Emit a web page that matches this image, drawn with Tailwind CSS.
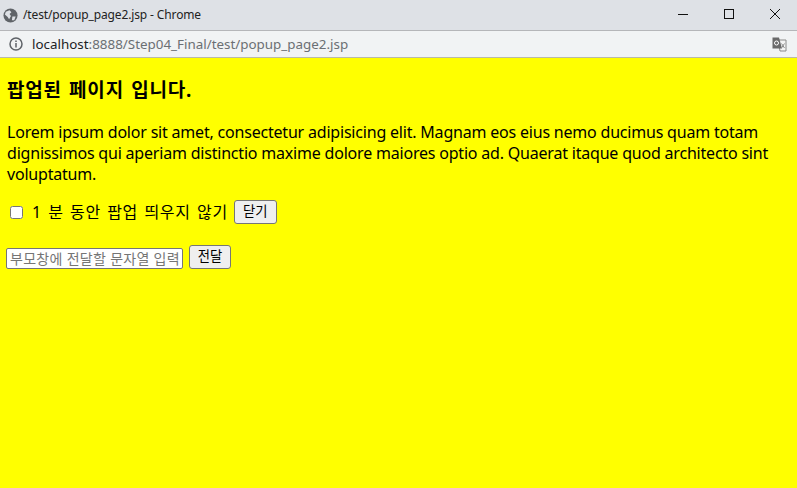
<!DOCTYPE html>
<html lang="ko">
<head>
    <meta charset="UTF-8">
    <title>/test/popup_page2.jsp - Chrome</title>
    <script src="https://cdn.jsdelivr.net/npm/@tailwindcss/browser@4"></script>
</head>
<body class="h-[488px] w-[797px] overflow-hidden flex flex-col bg-[#ffff00] font-['Noto_Sans','Noto_Sans_CJK_KR',sans-serif]">

    <!-- title bar -->
    <div class="h-[30px] flex items-center bg-[#dee1e6] border-b border-[#b5b6b9] box-content shrink-0">
        <svg class="ml-[3px] w-[15px] h-[15px]" viewBox="0 0 16 16">
            <circle cx="8" cy="8" r="7.5" fill="#5f6368"/>
            <path d="M3 4 L7 2.5 L9 4.5 L7 6.5 L8.5 8.5 L6.5 12 L5 9.5 L2 7 Z M10 9 L13.5 9 L12 13 L9.5 13 Z" fill="#dee1e6"/>
        </svg>
        <span class="ml-[5px] text-[12px] text-[#222] tracking-[-0.13px]">/test/popup_page2.jsp - Chrome</span>
        <div class="ml-auto flex items-center">
            <svg class="w-[46px] h-[30px]" viewBox="0 0 46 30"><path d="M19 14.5 H29" stroke="#111" fill="none"/></svg>
            <svg class="w-[46px] h-[30px]" viewBox="0 0 46 30"><rect x="19.5" y="9.5" width="9" height="9" stroke="#111" fill="none"/></svg>
            <svg class="w-[46px] h-[30px]" viewBox="0 0 46 30"><path d="M19 9 L29 19 M29 9 L19 19" stroke="#111" fill="none"/></svg>
        </div>
    </div>

    <!-- address bar -->
    <div class="h-[26px] flex items-center bg-[#f1f3f4] border-b border-[#b9b9a8] box-content shrink-0">
        <svg class="ml-[9px] w-[14px] h-[14px]" viewBox="0 0 14 14">
            <circle cx="7" cy="7" r="6" stroke="#5f6368" stroke-width="1.5" fill="none"/>
            <path d="M7 6 V10.5 M7 3.5 V5" stroke="#5f6368" stroke-width="1.5" fill="none"/>
        </svg>
        <span class="ml-[9px] text-[13.4px] text-[#6b6f73]"><span class="text-[#202124]">localhost</span>:8888/Step04_Final/test/popup_page2.jsp</span>
        <svg class="ml-auto mr-[10px] w-[15px] h-[15px]" viewBox="0 0 15 15">
            <path d="M6 3 H14 V14 H8 Z" fill="#f4f4f4" stroke="#8a8a8a"/>
            <path d="M0.5 0.5 H7 L10 11.5 H0.5 Z" fill="#6a6a6a"/>
            <circle cx="4.5" cy="6" r="2" fill="none" stroke="#fff"/>
            <path d="M9.5 6.5 L12.5 11 M12.5 6.5 L9.5 11" stroke="#8a8a8a" fill="none"/>
        </svg>
    </div>

    <!-- page -->
    <div class="flex-1 px-[7px] text-black">
        <h3 class="mt-[19px] text-[19px] leading-[26px] font-bold tracking-[0.8px] [word-spacing:1.5px]">팝업된 페이지 입니다.</h3>
        <p class="mt-[19px] text-[16px] leading-[21px] tracking-[-0.2px]">Lorem ipsum dolor sit amet, consectetur adipisicing elit. Magnam eos eius nemo ducimus quam totam dignissimos qui aperiam distinctio maxime dolore maiores optio ad. Quaerat itaque quod architecto sint voluptatum.</p>
        <div class="mt-[15px] flex items-center h-[24px]">
            <input type="checkbox" class="ml-[3px] w-[13px] h-[13px] appearance-auto">
            <label class="ml-[9px] text-[16px] tracking-[0.7px] [word-spacing:1.5px]">1 분 동안 팝업 띄우지 않기</label>
            <button class="ml-[6px] h-[24px] w-[43px] text-[13.33px] bg-[#efefef] border border-[#767676] rounded-[3px]">닫기</button>
        </div>
        <div class="mt-[21px] flex items-end h-[24px]">
            <input type="text" placeholder="부모창에 전달할 문자열 입력" class="-ml-[1px] w-[177px] h-[21px] px-[3px] text-[14px] tracking-[0.3px] bg-white border border-[#767676] rounded-[2px] placeholder:text-[#757575]">
            <button class="ml-[6px] h-[24px] w-[42px] text-[13.33px] bg-[#efefef] border border-[#767676] rounded-[3px]">전달</button>
        </div>
    </div>

</body>
</html>
